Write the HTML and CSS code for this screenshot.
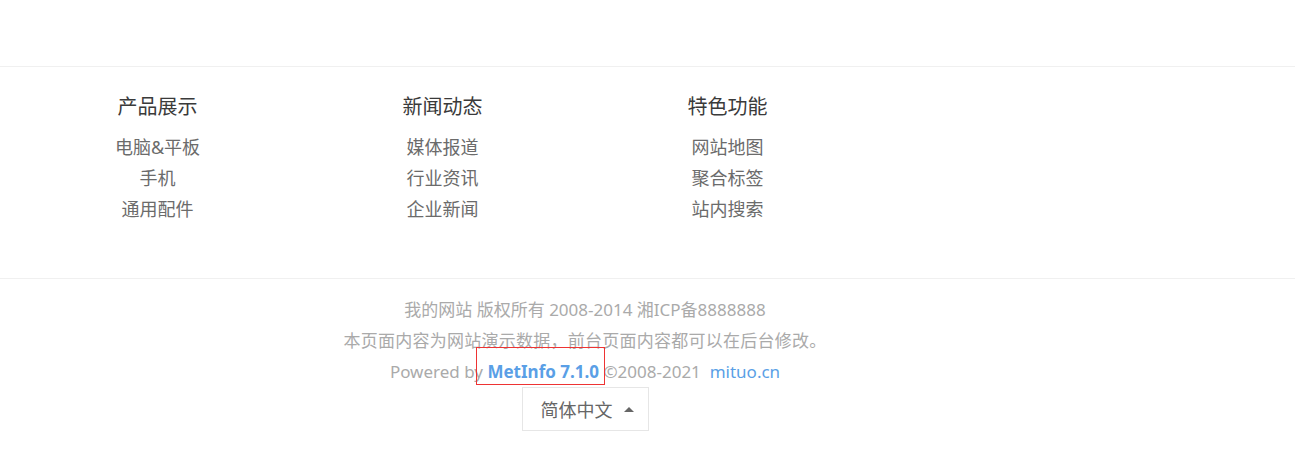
FILE: index.html
```html
<!DOCTYPE html>
<html lang="zh-CN">
<head>
<meta charset="utf-8">
<title>Footer</title>
<link rel="stylesheet" href="styles.css">
</head>
<body>
<div class="top-space"></div>
<footer>
  <nav class="foot-nav">
    <div class="foot-nav-inner">
      <div class="col">
        <h3 class="col-title">产品展示</h3>
        <ul class="col-list">
          <li><a href="#">电脑&amp;平板</a></li>
          <li><a href="#">手机</a></li>
          <li><a href="#">通用配件</a></li>
        </ul>
      </div>
      <div class="col">
        <h3 class="col-title">新闻动态</h3>
        <ul class="col-list">
          <li><a href="#">媒体报道</a></li>
          <li><a href="#">行业资讯</a></li>
          <li><a href="#">企业新闻</a></li>
        </ul>
      </div>
      <div class="col">
        <h3 class="col-title">特色功能</h3>
        <ul class="col-list">
          <li><a href="#">网站地图</a></li>
          <li><a href="#">聚合标签</a></li>
          <li><a href="#">站内搜索</a></li>
        </ul>
      </div>
    </div>
  </nav>
  <div class="foot-info">
    <div class="foot-info-inner">
      <p class="line">我的网站 版权所有 2008-2014 湘ICP备8888888</p>
      <p class="line line-wide">本页面内容为网站演示数据，前台页面内容都可以在后台修改。</p>
      <p class="line">Powered by <a class="brand" href="#">MetInfo 7.1.0</a> ©2008-2021&nbsp; <a class="site" href="#">mituo.cn</a></p>
      <button class="lang" type="button">简体中文<span class="caret"></span></button>
    </div>
  </div>
</footer>
</body>
</html>
```
FILE: styles.css
```css
html, body {
  margin: 0;
  padding: 0;
  background: #fff;
}
body {
  font-family: "Noto Sans", "Noto Sans CJK SC", sans-serif;
}
.top-space {
  height: 66px;
}
.foot-nav {
  border-top: 1px solid #f0f0f0;
  padding: 25px 0 53px;
}
.foot-nav-inner {
  width: 1170px;
  box-sizing: border-box;
  padding: 0 15px;
  display: flex;
}
.col {
  width: 285px;
  text-align: center;
}
.col-title {
  margin: 0 0 10px;
  font-size: 20px;
  font-weight: normal;
  line-height: 30px;
  color: #3a3a3a;
}
.col-list {
  list-style: none;
  margin: 0;
  padding: 0;
}
.col-list li {
  font-size: 18px;
  line-height: 31px;
}
.col-list a {
  color: #6b6b6b;
  text-decoration: none;
}
.foot-info {
  border-top: 1px solid #f0f0f0;
  padding: 15px 0 30px;
}
.foot-info-inner {
  width: 1170px;
  text-align: center;
}
.line {
  margin: 0;
  font-size: 17px;
  line-height: 31px;
  color: #aaa;
}
.line-wide {
  letter-spacing: 0.25px;
}
.brand {
  position: relative;
  color: #5a9fe6;
  font-weight: bold;
  text-decoration: none;
}
.brand::after {
  content: "";
  position: absolute;
  left: -11px;
  right: -6px;
  top: -13px;
  bottom: -2px;
  border: 1px solid #ee3333;
}
.site {
  color: #5a9fe6;
  text-decoration: none;
}
.lang {
  display: inline-flex;
  align-items: center;
  box-sizing: border-box;
  width: 127px;
  height: 44px;
  margin: 0;
  padding: 0 0 0 18px;
  border: 1px solid #e6e6e6;
  background: #fff;
  font-family: "Noto Sans", "Noto Sans CJK SC", sans-serif;
  font-size: 18px;
  color: #666;
  cursor: pointer;
}
.caret {
  display: inline-block;
  width: 0;
  height: 0;
  margin-left: 11px;
  border-left: 5px solid transparent;
  border-right: 5px solid transparent;
  border-bottom: 5px solid #666;
}
```
